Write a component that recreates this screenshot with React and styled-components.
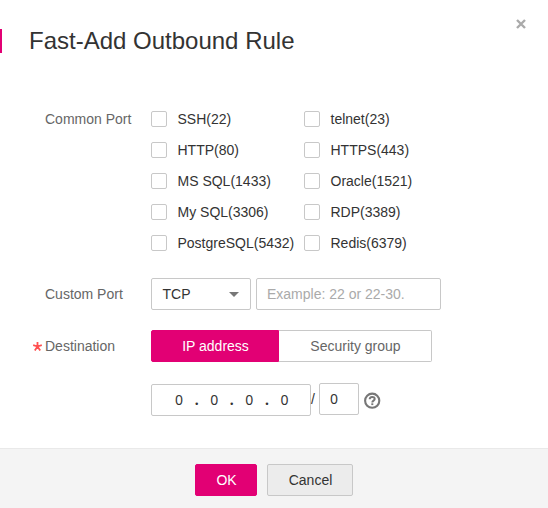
import React from "react";
import styled, { createGlobalStyle } from "styled-components";

const GlobalStyle = createGlobalStyle`
  *, *::before, *::after { box-sizing: border-box; }
  body {
    margin: 0;
    background: #fff;
    color: #333;
    font: 14px/16px "Liberation Sans", Arial, sans-serif;
  }
  input, button { font: inherit; margin: 0; }
`;

const Dialog = styled.div`
  width: 548px;
  height: 508px;
  display: flex;
  flex-direction: column;
  overflow: hidden;
`;

const Header = styled.header`
  display: flex;
  align-items: flex-start;
  height: 111px;
`;

const Accent = styled.span`
  width: 2px;
  height: 24px;
  margin-top: 29px;
  background: #e20074;
`;

const Title = styled.h1`
  flex: 1;
  margin: 26px 0 0 27px;
  font-size: 24px;
  line-height: 30px;
  font-weight: 400;
`;

const CloseButton = styled.button`
  display: flex;
  width: 10px;
  height: 10px;
  padding: 0;
  margin: 19px 22px 0 0;
  border: 0;
  background: none;
`;

const Body = styled.main`
  flex: 1;
`;

const Row = styled.div`
  display: flex;
  align-items: flex-start;
  margin-top: ${(p) => p.$top || 0}px;
`;

const Label = styled.div`
  display: flex;
  flex: none;
  width: 151px;
  height: ${(p) => p.$height || 32}px;
  align-items: center;
  color: #666;
`;

const Marker = styled.span`
  display: flex;
  width: 45px;
  padding: 0 0 0 33px;
`;

const CheckGrid = styled.div`
  display: grid;
  grid-template-columns: 153px auto;
  row-gap: 15px;
`;

const CheckLabel = styled.label`
  display: flex;
  gap: 10.5px;
  white-space: nowrap;
`;

const Checkbox = styled.input`
  appearance: none;
  flex: none;
  width: 16px;
  height: 16px;
  border: 1px solid #c8c8c8;
  border-radius: 2px;
  background: #fff;
`;

const Select = styled.button`
  display: flex;
  align-items: center;
  justify-content: space-between;
  width: 100px;
  height: 32px;
  margin-right: 5px;
  padding: 0 11px 0 10.5px;
  border: 1px solid #c8c8c8;
  border-radius: 2px;
  background: #fff;
  color: #333;
`;

const Caret = styled.span`
  border: 5px solid transparent;
  border-top-color: #777;
  border-bottom: 0;
`;

const TextInput = styled.input`
  width: 185px;
  height: 32px;
  padding: 0 10px;
  border: 1px solid #c8c8c8;
  border-radius: 2px;
  outline: 0;
  color: #333;
  &::placeholder { color: #aaa; opacity: 1; }
`;

const Segment = styled.button`
  width: ${(p) => p.$width}px;
  height: 32px;
  padding: 0 0 0 1px;
  border: 1px solid ${(p) => (p.$active ? "#e20074" : "#c8c8c8")};
  border-left-width: ${(p) => (p.$active ? 1 : 0)}px;
  border-radius: ${(p) => (p.$active ? "2px 0 0 2px" : "0 2px 2px 0")};
  background: ${(p) => (p.$active ? "#e20074" : "#fff")};
  color: ${(p) => (p.$active ? "#fff" : "#666")};
`;

const AddressRow = styled.div`
  display: flex;
  align-items: flex-start;
  margin: 21px 0 0 151px;
`;

const AddressBox = styled.div`
  display: flex;
  align-items: center;
  width: 160px;
  height: 32px;
  margin-top: 1px;
  padding-left: 18px;
  border: 1px solid #c8c8c8;
  border-radius: 2px;
  font-family: "Noto Sans", sans-serif;
`;

const Octet = styled.input`
  width: 18px;
  height: 20px;
  padding: 0;
  border: 0;
  outline: 0;
  background: none;
  color: #333;
  text-align: center;
  font-family: "Noto Sans", sans-serif;
  line-height: 20px;
`;

const Dot = styled.span`
  width: 17.2px;
  text-align: center;
  font-weight: 700;
`;

const Slash = styled.span`
  width: 8px;
  padding-top: 8px;
`;

const PrefixBox = styled.div`
  display: flex;
  align-items: center;
  width: 40px;
  height: 32px;
  padding-left: 5px;
  border: 1px solid #c8c8c8;
  border-radius: 2px;
`;

const HelpIcon = styled.svg`
  width: 17px;
  height: 17px;
  margin: 9px 0 0 5px;
`;

const Footer = styled.footer`
  display: flex;
  justify-content: center;
  gap: 10px;
  height: 60px;
  padding-top: 15px;
  border-top: 1px solid #e9e9e9;
  background: #f4f4f4;
`;

const Button = styled.button`
  width: ${(p) => (p.$primary ? 62 : 86)}px;
  height: 32px;
  padding: 0 0 0 1px;
  border: 1px solid ${(p) => (p.$primary ? "#e20074" : "#c8c8c8")};
  border-radius: 2px;
  background: ${(p) => (p.$primary ? "#e20074" : "#ececec")};
  color: ${(p) => (p.$primary ? "#fff" : "#333")};
`;

const ports = [
  "SSH(22)", "telnet(23)",
  "HTTP(80)", "HTTPS(443)",
  "MS SQL(1433)", "Oracle(1521)",
  "My SQL(3306)", "RDP(3389)",
  "PostgreSQL(5432)", "Redis(6379)",
];

const octets = ["0", "0", "0", "0"];

export default function App() {
  return (
    <>
      <GlobalStyle />
      <Dialog role="dialog">
        <Header>
          <Accent />
          <Title>Fast-Add Outbound Rule</Title>
          <CloseButton aria-label="Close">
            <svg width="10" height="10" viewBox="0 0 10 10">
              <path d="M1 1l8 8M9 1L1 9" stroke="#aaa" strokeWidth="2.4" />
            </svg>
          </CloseButton>
        </Header>
        <Body>
          <Row>
            <Label $height={16}><Marker />Common Port</Label>
            <CheckGrid>
              {ports.map((port) => (
                <CheckLabel key={port}>
                  <Checkbox type="checkbox" />
                  {port}
                </CheckLabel>
              ))}
            </CheckGrid>
          </Row>
          <Row $top={27}>
            <Label><Marker />Custom Port</Label>
            <Select>TCP<Caret /></Select>
            <TextInput placeholder="Example: 22 or 22-30." />
          </Row>
          <Row $top={20}>
            <Label>
              <Marker>
                <svg width="9" height="9" viewBox="0 0 9 9">
                  <path d="M4.5 4.5V0M4.5 4.5L.2 3.2M4.5 4.5l4.3-1.3M4.5 4.5L1.8 8.5M4.5 4.5l2.7 4" stroke="#ff5050" strokeWidth="1.8" fill="none" />
                </svg>
              </Marker>
              Destination
            </Label>
            <Segment $active $width={128}>IP address</Segment>
            <Segment $width={153}>Security group</Segment>
          </Row>
          <AddressRow>
            <AddressBox>
              {octets.map((value, i) => (
                <React.Fragment key={i}>
                  {i > 0 && <Dot>.</Dot>}
                  <Octet defaultValue={value} />
                </React.Fragment>
              ))}
            </AddressBox>
            <Slash>/</Slash>
            <PrefixBox><Octet defaultValue="0" /></PrefixBox>
            <HelpIcon viewBox="0 0 17 17" fill="none">
              <circle cx="8.2" cy="8.7" r="7.1" stroke="#777" strokeWidth="2.1" />
              <path d="M5.7 7.2C5.7 4.2 10.7 4.1 10.7 7C10.7 8.6 8.3 8.6 8.3 10.4" stroke="#777" strokeWidth="2" />
              <path d="M7.3 11.3h2v1.8h-2z" fill="#777" />
            </HelpIcon>
          </AddressRow>
        </Body>
        <Footer>
          <Button $primary>OK</Button>
          <Button>Cancel</Button>
        </Footer>
      </Dialog>
    </>
  );
}
